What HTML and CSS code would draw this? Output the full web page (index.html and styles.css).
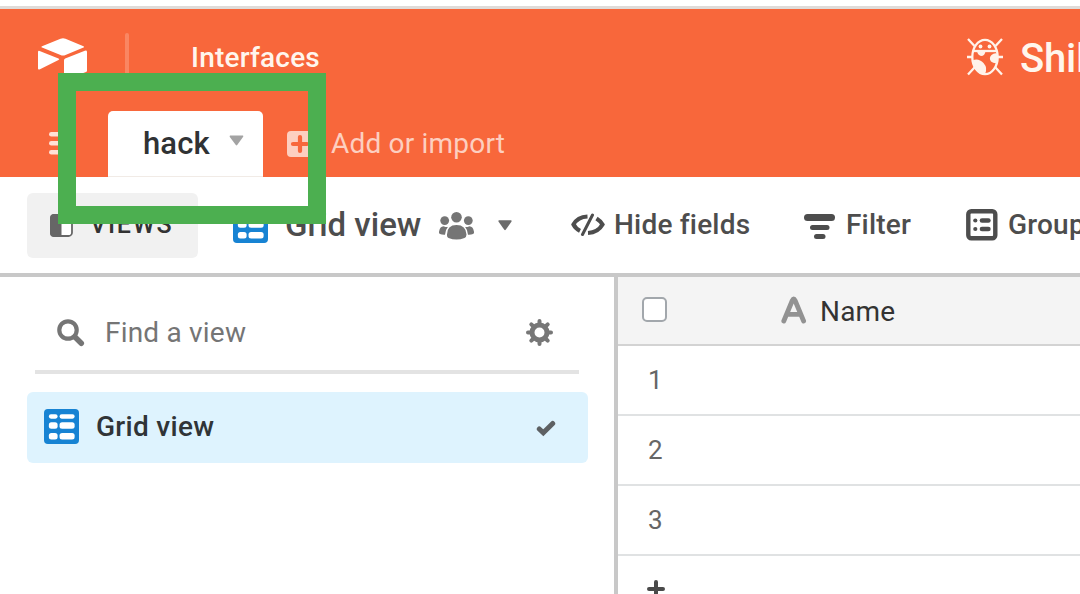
FILE: index.html
```html
<!DOCTYPE html>
<html lang="en">
<head>
<meta charset="utf-8">
<title>Grid view</title>
<link rel="stylesheet" href="styles.css">
</head>
<body>
<svg class="defs" width="0" height="0">
  <symbol id="grid" viewBox="0 0 36 36">
    <rect width="36" height="36" rx="4" fill="#1783d3"/>
    <g class="cells">
      <rect x="5" y="5.3" width="9" height="4.6" rx="2.2"/><rect x="16" y="5.3" width="15.5" height="4.6" rx="2.2"/>
      <rect x="5" y="13.6" width="9" height="6.8" rx="2.6"/><rect x="16" y="13.6" width="15.5" height="6.8" rx="2.6"/>
      <rect x="5" y="24.7" width="9" height="6.6" rx="2.6"/><rect x="16" y="24.7" width="15.5" height="6.6" rx="2.6"/>
    </g>
  </symbol>
</svg>
<div class="app">
  <div class="strip"></div>
  <header class="header">
    <div class="topbar">
      <svg class="logo" width="50" height="42" viewBox="0 0 50 42" fill="#fff">
        <path d="M22.500 .8Q25 -.4 27.500 .8L45.500 8.200Q46.800 9 45.500 9.600L27.500 17Q25 18 22.500 17L4 9.600Q2.700 9 4 8.200Z"/>
        <path d="M0 14Q0 12.400 1.600 12.900L20.500 20.500Q22 21.200 20.500 22L2 31.300Q0 32.200 0 30.500Z"/>
        <path d="M26 22.200Q26 21 27.200 20.500L46.800 12.700Q49 12 49 14V32.500Q49 33.600 48 34L26 42Z"/>
      </svg>
      <div class="divider"></div>
      <a class="nav">Interfaces</a>
      <svg class="bug" width="36" height="38" viewBox="0 0 36 38" fill="none" stroke="#fff3ea" stroke-width="2.300">
        <path d="M1 1L7.500 8M35 1L28.500 8M0 19H6M30 19H36M1 36.500L8 29M35 36.500L28 29"/>
        <ellipse cx="18" cy="19" rx="12.700" ry="17.200"/>
        <path d="M6 13H30"/>
        <g fill="#fff3ea" stroke="none"><circle cx="13.500" cy="8.500" r="1.900"/><circle cx="22.500" cy="8.500" r="1.900"/>
        <path d="M10 13H18.500Q18 18 14 18Q10.500 17 10 13ZM30.700 15.500V25Q27 26 24 23.500Q21.500 20 24.500 17Q27 14.500 30.700 15.500ZM6 22Q12 20 16.500 25Q21 30 18 36.200Q13 36 9.500 31Q6.500 27 6 22Z"/></g>
      </svg>
      <span class="base">Shil</span>
    </div>
    <div class="tabs">
      <svg class="menu" width="24" height="24" viewBox="0 0 24 24" fill="#ffe0d5"><rect width="24" height="4.600" rx="2.300"/><rect y="9" width="24" height="4.600" rx="2.300"/><rect y="18" width="24" height="4.600" rx="2.300"/></svg>
      <div class="tab"><span class="tab-name">hack</span><svg width="15" height="12" viewBox="0 0 15 12"><path d="M1 .5H14Q14.700 1 14 2L8.200 10Q7.500 10.800 6.800 10L.8 2Q.3 1 1 .5Z" fill="#a3a3a3"/></svg></div>
      <svg class="plus" width="26" height="26" viewBox="0 0 26 26"><rect width="26" height="26" rx="4" fill="#fdcfc0"/><path d="M13 6V20M6 13H20" stroke="#f8673b" stroke-width="4.200" stroke-linecap="round"/></svg>
      <span class="import">Add or import</span>
    </div>
  </header>
  <div class="toolbar">
    <div class="views">
      <svg width="23" height="23" viewBox="0 0 23 23"><rect x="1" y="1" width="21" height="21" rx="3.500" fill="#fff" stroke="#666" stroke-width="1.800"/><path d="M11.500 0H4Q0 0 0 4V19Q0 23 4 23H11.500Z" fill="#666"/></svg>
      <span class="views-label">VIEWS</span>
    </div>
    <svg class="grid-icon" width="35" height="35"><use href="#grid"/></svg>
    <span class="current">Grid view</span>
    <svg class="people" width="35" height="28" viewBox="0 0 35 28" fill="#757575">
      <circle cx="17.500" cy="5.300" r="5.300"/><circle cx="5.700" cy="8.600" r="4.400"/><circle cx="29.300" cy="8.600" r="4.400"/>
      <path d="M8 22.500Q8 13 17.500 13T27.500 22.500Q27.500 25 25.500 26Q17.500 29 9.500 26Q7.700 25 8 22.500ZM1 22Q-.5 21.500 .2 19Q1 14.500 4.500 14.200Q8 15.500 9 14.800Q6.500 17.500 6 22.800Q3 23 1 22ZM34 22Q35.500 21.500 34.800 19Q34 14.500 30.500 14.200Q27 15.500 26 14.800Q28.500 17.500 29 22.800Q32 23 34 22Z"/>
    </svg>
    <svg class="caret" width="14" height="11" viewBox="0 0 14 11"><path d="M1 .3H13Q14 .8 13.400 1.800L7.700 9.800Q7 10.500 6.300 9.800L.6 1.800Q0 .8 1 .3Z" fill="#6b6b6b"/></svg>
    <svg class="hide" width="34" height="24" viewBox="0 0 34 24" fill="none" stroke="#4d4d4d">
      <path d="M16.500 3.500Q6.500 4 2.500 11.500Q4.500 15.500 9 17.800" stroke-width="4.200"/>
      <path d="M25.500 5.500Q29.500 8 31.500 11.500Q27 19.500 17 20" stroke-width="4.200"/>
      <path d="M21.500 2L11.500 21.500" stroke-width="3" stroke-linecap="round"/>
    </svg>
    <span class="label hide-label">Hide fields</span>
    <svg class="filter" width="32" height="25" viewBox="0 0 32 25" fill="#4d4d4d"><rect width="31" height="7" rx="3.500"/><rect x="6" y="11" width="19.500" height="5" rx="2.500"/><rect x="10" y="20" width="11.500" height="5" rx="2.500"/></svg>
    <span class="label filter-label">Filter</span>
    <svg class="group" width="32" height="32" viewBox="0 0 32 32" fill="#4d4d4d"><rect x="2.300" y="2.300" width="27" height="27" rx="3" fill="none" stroke="#4d4d4d" stroke-width="4.400"/><circle cx="9.300" cy="11.500" r="2.100"/><circle cx="9.300" cy="20" r="2.100"/><rect x="13.700" y="9.200" width="11" height="4.600" rx="2.300"/><rect x="13.700" y="17.700" width="11" height="4.600" rx="2.300"/></svg>
    <span class="label group-label">Group</span>
  </div>
  <div class="body">
    <aside class="sidebar">
      <div class="search">
        <svg width="28" height="28" viewBox="0 0 28 28" fill="none" stroke="#757575"><circle cx="11" cy="11" r="8.700" stroke-width="4.200"/><path d="M18 18L24.300 24.300" stroke-width="5.500" stroke-linecap="round"/></svg>
        <span class="find">Find a view</span>
        <svg width="27" height="27" viewBox="-13.500 -13.500 27 27" fill="none" stroke="#777"><circle r="7.500" stroke-width="5"/><path d="M0-9V-11.500M0 9V11.500M-9 0H-11.500M9 0H11.500M-6.500-6.500L-8.200-8.200M6.500-6.500L8.200-8.200M-6.500 6.500L-8.200 8.200M6.500 6.500L8.200 8.200" stroke-width="4" stroke-linecap="round"/></svg>
      </div>
      <div class="selected">
        <svg class="tinted" width="35" height="35"><use href="#grid"/></svg>
        <span class="view-name">Grid view</span>
        <svg class="check" width="20" height="17" viewBox="0 0 20 17"><path d="M3.300 9L7.300 12.800L16.700 3.500" fill="none" stroke="#5d6063" stroke-width="5" stroke-linecap="round"/></svg>
      </div>
    </aside>
    <main class="table">
      <div class="head">
        <span class="checkbox"></span>
        <svg class="type" width="26" height="28" viewBox="0 0 26 28" fill="none" stroke="#929292" stroke-width="4.800" stroke-linecap="round" stroke-linejoin="round"><path d="M2.800 25L11.300 4.500Q12.700 1.500 14.100 4.500L22.600 25M6.500 18.300H19"/></svg>
        <span class="name">Name</span>
      </div>
      <div class="row">1</div>
      <div class="row">2</div>
      <div class="row">3</div>
      <div class="add"><svg width="18" height="18" viewBox="0 0 18 18"><path d="M9 2V16M2 9H16" stroke="#4a4a4a" stroke-width="4" stroke-linecap="round"/></svg></div>
    </main>
  </div>
  <div class="highlight"></div>
</div>
</body>
</html>
```
FILE: styles.css
```css
* { box-sizing: border-box; }
body { margin: 0; font-family: Roboto, sans-serif; background: #fff; }
svg { display: block; flex: none; }
span, a { flex: none; white-space: nowrap; }
.defs { position: absolute; }
.app { position: relative; width: 1080px; height: 594px; overflow: hidden; }
.strip { height: 9px; border-bottom: 3px solid #dfdbd8; }
.header { height: 168px; background: #f8673b; }
.topbar { display: flex; align-items: center; height: 96px; }
.logo { margin: 4px 0 0 38px; }
.divider { flex: none; width: 4px; height: 48px; margin-left: 37px; border-radius: 2px; background: #fa8662; }
.nav { width: 776px; padding-left: 62px; color: #fff6ed; font-size: 28px; font-weight: 500; letter-spacing: 0.2px; }
.bug { margin-left: 62px; }
.base { margin: 2px 0 0 17px; color: #fff6ed; font-size: 40px; font-weight: 500; letter-spacing: -0.2px; }
.tabs { display: flex; height: 72px; padding-top: 6px; align-items: center; }
.menu { margin-left: 49px; }
.tab { display: flex; flex: none; width: 155px; height: 66px; margin-left: 35px; padding-left: 35px; align-items: center; border-radius: 5px 5px 0 0; background: #fff; border-bottom: 1px solid #f1ebe6; }
.tab-name { width: 86px; margin-top: -1px; color: #303234; font-size: 31px; font-weight: 500; letter-spacing: 0.1px; }
.tab svg { margin-top: -6px; }
.plus { margin-left: 24px; }
.import { margin: -2px 0 0 18px; color: #fdcfc0; font-size: 28px; letter-spacing: 0.2px; }
.toolbar { display: flex; height: 100px; align-items: center; border-bottom: 4px solid #c8c8c8; overflow: hidden; }
.views { display: flex; flex: none; width: 171px; height: 65px; margin-left: 27px; padding-left: 23px; align-items: center; border-radius: 6px; background: #f1f1f1; }
.views-label { margin: -2px 0 0 17px; color: #333; font-size: 25px; font-weight: 500; letter-spacing: 1.8px; }
.grid-icon { margin-left: 35px; }
.cells { fill: #fff; }
.tinted { margin-top: -2px; }
.current { width: 154px; margin: -2px 0 0 17px; color: #4d4d4d; font-size: 33px; font-weight: 500; }
.people { margin-top: 2px; }
.caret { margin-left: 24px; }
.hide { margin-left: 59px; }
.label { margin-top: -2px; color: #4d4d4d; font-size: 28px; font-weight: 500; letter-spacing: 0.2px; }
.hide-label { width: 190px; margin-left: 9px; }
.filter { margin-top: 3px; }
.filter-label { width: 120px; margin-left: 10px; }
.group-label { margin-left: 10px; }
.body { display: flex; height: 317px; }
.sidebar { flex: none; width: 614px; padding: 18px 26px 0 27px; }
.search { display: flex; width: 544px; height: 79px; margin-left: 8px; padding: 0 26px 0 22px; align-items: center; border-bottom: 4px solid #e3e3e3; }
.find { flex: 1; margin-left: 20px; color: #757575; font-size: 28px; letter-spacing: 0.2px; }
.selected { display: flex; height: 71px; margin-top: 18px; padding: 0 32px 0 17px; align-items: center; border-radius: 6px; background: #def3fe; }
.view-name { flex: 1; margin: -2px 0 0 17px; color: #303437; font-size: 28px; font-weight: 500; letter-spacing: 0.3px; }
.check { margin-top: 2px; }
.table { flex: 1; border-left: 4px solid #c8c8c8; }
.head { display: flex; height: 69px; align-items: center; background: #f4f4f4; border-bottom: 2px solid #d3d3d3; }
.checkbox { width: 25px; height: 25px; margin: -3px 0 0 24px; border: 2px solid #a2a7ac; border-radius: 5px; background: #fff; }
.type { margin: -1px 0 0 114px; }
.name { margin: 2px 0 0 13px; color: #333; font-size: 28px; letter-spacing: 0.2px; }
.row { display: flex; width: 100%; height: 70px; padding-left: 30px; align-items: center; color: #666; font-size: 26px; border-bottom: 2px solid #e0e2e3; }
.add { padding: 24px 0 0 29px; }
.highlight { position: absolute; left: 58px; top: 73px; width: 268px; height: 151px; border: 18px solid #4caf50; }
```
